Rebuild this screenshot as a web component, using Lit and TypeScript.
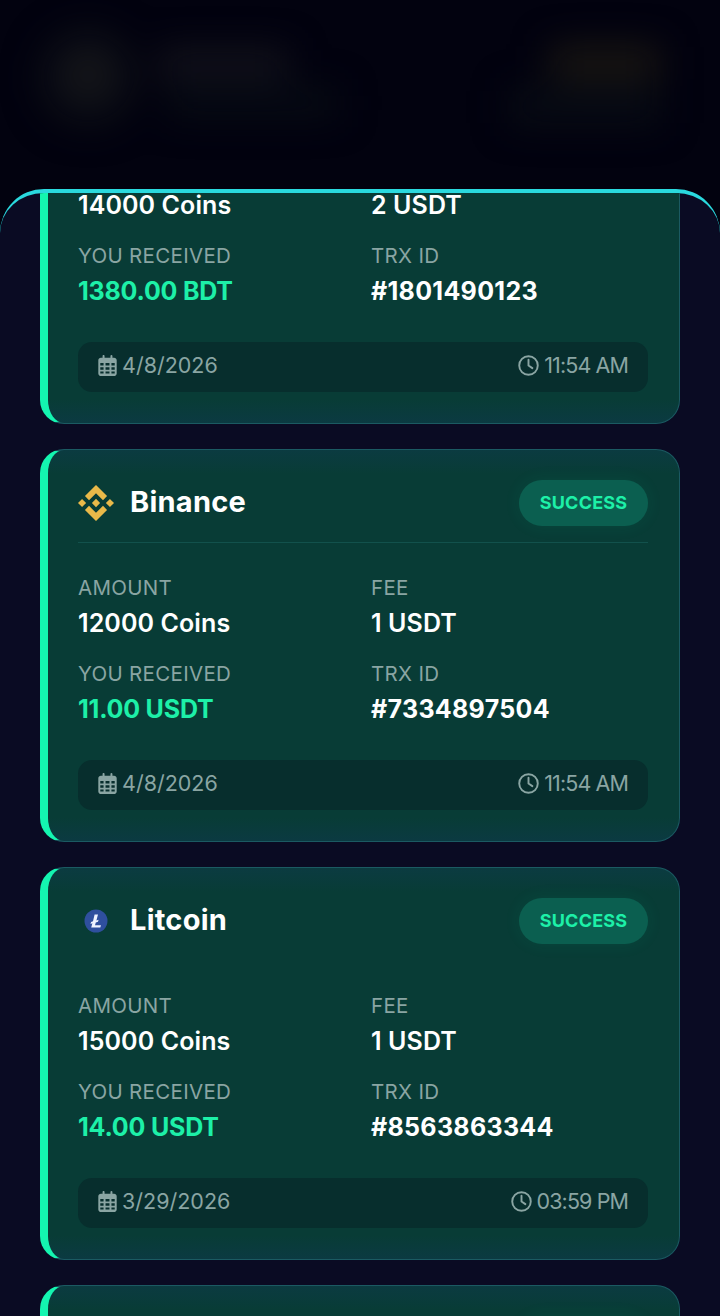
import { LitElement, html, css, svg } from "lit";
import { customElement } from "lit/decorators.js";

interface Tx {
  method: "binance" | "litecoin" | "none";
  name: string;
  amount: string;
  fee: string;
  received: string;
  trx: string;
  date: string;
  time: string;
  divider: boolean;
}

const TXS: Tx[] = [
  { method: "none", name: "", amount: "14000 Coins", fee: "2 USDT", received: "1380.00 BDT", trx: "#1801490123", date: "4/8/2026", time: "11:54 AM", divider: true },
  { method: "binance", name: "Binance", amount: "12000 Coins", fee: "1 USDT", received: "11.00 USDT", trx: "#7334897504", date: "4/8/2026", time: "11:54 AM", divider: true },
  { method: "litecoin", name: "Litcoin", amount: "15000 Coins", fee: "1 USDT", received: "14.00 USDT", trx: "#8563863344", date: "3/29/2026", time: "03:59 PM", divider: false },
  { method: "none", name: "", amount: "", fee: "", received: "", trx: "", date: "", time: "", divider: false },
];

const binance = svg`<svg class="logo" viewBox="0 0 126.61 126.61" width="36" height="36"><g fill="#e9b949"><path d="M38.73 53.2 63.31 28.62 87.91 53.22 102.21 38.91 63.31 0 24.42 38.9z"/><path d="M0 63.31 14.3 49.01 28.6 63.31 14.3 77.61z"/><path d="M38.73 73.41 63.31 97.99 87.91 73.39 102.22 87.69 63.31 126.61 24.41 87.71z"/><path d="M98.01 63.31 112.31 49.01 126.61 63.31 112.31 77.61z"/><path d="M77.83 63.3 63.31 48.78 48.81 63.28 63.31 77.83z"/></g></svg>`;
const litecoin = svg`<svg class="logo" viewBox="0 0 36 36" width="36" height="36"><circle cx="18" cy="18" r="11.5" fill="#2f4f9e"/><path d="M16.6 11.5h3.4l-1.6 6 2.2-.8-.6 2-2.2.8-.8 2.7h6l-.7 2.3H13.2l1.2-4.2-1.9.7.6-2 1.9-.7Z" fill="#eef2ff"/></svg>`;
const calendar = svg`<svg class="ic" viewBox="0 0 448 512" width="19" height="21"><path fill="currentColor" d="M128 0c13 0 24 11 24 24v40h144V24a24 24 0 0 1 48 0v40h40c35 0 64 29 64 64v320c0 35-29 64-64 64H64c-35 0-64-29-64-64V128c0-35 29-64 64-64h40V24c0-13 11-24 24-24ZM48 192v64h80v-64H48Zm128 0v64h96v-64h-96Zm144 0v64h80v-64h-80ZM48 296v64h80v-64H48Zm128 0v64h96v-64h-96Zm144 0v64h80v-64h-80ZM48 400v48h80v-48H48Zm128 0v48h96v-48h-96Zm144 0v48h80v-48h-80Z"/></svg>`;
const clock = svg`<svg class="ic" viewBox="0 0 24 24" width="21" height="21"><circle cx="12" cy="12" r="10.6" fill="none" stroke="currentColor" stroke-width="2.2"/><path d="M12 5.5V12l4.4 3" fill="none" stroke="currentColor" stroke-width="2.2" stroke-linecap="round" stroke-linejoin="round"/></svg>`;

@customElement("app-root")
export class AppRoot extends LitElement {
  static styles = css`
    :host {
      display: block;
      width: 720px;
      height: 1316px;
      overflow: hidden;
      background: #02020f;
      font-family: "Inter", "Open Sans", sans-serif;
    }
    .header {
      height: 189px;
      box-sizing: border-box;
      padding: 30px 60px 0 40px;
      display: flex;
      justify-content: space-between;
      filter: blur(18px);
      overflow: hidden;
    }
    .hleft { display: flex; gap: 22px; }
    .avatar { width: 96px; height: 96px; border-radius: 50%; background: radial-gradient(circle at 50% 45%, #1b1a1c 0, #0c0e16 45%, #06080f 100%); }
    .lines { display: flex; flex-direction: column; gap: 12px; padding-top: 20px; }
    .l1 { width: 130px; height: 28px; background: #14141c; }
    .l2 { width: 170px; height: 26px; background: #070c14; margin-left: 10px; }
    .hright { display: flex; flex-direction: column; gap: 10px; padding-top: 16px; align-items: flex-end; }
    .r1 { width: 110px; height: 34px; background: #1a1712; }
    .r2 { width: 150px; height: 34px; background: #080c14; }
    .sheet {
      height: 1127px;
      box-sizing: border-box;
      background: #0a0b23;
      border-top: 4px solid #2ad9de;
      border-radius: 44px 44px 0 0;
      overflow: hidden;
    }
    .list {
      margin-top: -162px;
      padding: 0 40px;
      display: flex;
      flex-direction: column;
      gap: 25px;
    }
    .card {
      flex: none;
      height: 393px;
      box-sizing: border-box;
      padding: 30px 31px 31px 30px;
      background: linear-gradient(180deg, #0b3b41 0, #083c36 24px, #083c36 calc(100% - 24px), #0b3a42 100%);
      border: 1px solid #1b5a62;
      border-left: 8px solid #14f5b0;
      border-radius: 24px;
      display: flex;
      flex-direction: column;
    }
    .head {
      height: 46px;
      padding-bottom: 16px;
      flex: none;
      display: flex;
      align-items: center;
      justify-content: space-between;
      border-bottom: 1px solid transparent;
    }
    .head.rule { border-bottom-color: #12514c; }
    .method { display: flex; align-items: center; gap: 16px; margin-top: -1px; }
    .logo { display: block; }
    .name { font-size: 29px; line-height: 36px; padding-bottom: 2px; font-weight: 700; color: #fff; letter-spacing: 0.25px; }
    .badge {
      width: 129px;
      height: 46px;
      box-sizing: border-box;
      padding-bottom: 2px;
      border-radius: 23px;
      background: #0b5f50;
      box-shadow: 0 0 18px rgba(29, 240, 168, 0.07);
      color: #1df0a8;
      font-size: 18px;
      font-weight: 700;
      display: flex;
      align-items: center;
      justify-content: center;
      letter-spacing: 0.2px;
    }
    .grid {
      margin-top: 29px;
      display: grid;
      grid-template-columns: 277px 277px;
      column-gap: 16px;
      row-gap: 20px;
    }
    .cell { display: flex; flex-direction: column; gap: 8px; }
    .label { font-size: 20.5px; line-height: 32px; height: 28px; color: #8aa5a3; letter-spacing: 0.3px; }
    .value { font-size: 25px; line-height: 30px; font-weight: 600; color: #fff; letter-spacing: 0.1px; }
    .green { color: #1df0a8; font-weight: 700; letter-spacing: -0.2px; }
    .mono { font-weight: 700; letter-spacing: 0.3px; }
    .foot {
      margin-top: auto;
      height: 50px;
      flex: none;
      box-sizing: border-box;
      padding: 0 20px 4px;
      background: #072e2d;
      border-radius: 14px;
      display: flex;
      align-items: center;
      justify-content: space-between;
      color: #8aa5a3;
      font-size: 21.5px;
    }
    .stamp { display: flex; align-items: center; gap: 5px; }
    .time { letter-spacing: -0.9px; }
    .ic { display: block; }
    .skeleton { height: 393px; }
  `;

  private logo(t: Tx) {
    if (t.method === "binance") return binance;
    if (t.method === "litecoin") return litecoin;
    return html`<span class="logo"></span>`;
  }

  render() {
    return html`
      <div class="header">
        <div class="hleft">
          <div class="avatar"></div>
          <div class="lines"><div class="l1"></div><div class="l2"></div></div>
        </div>
        <div class="hright"><div class="r1"></div><div class="r2"></div></div>
      </div>
      <div class="sheet">
        <div class="list">
          ${TXS.map((t) => t.amount === "" ? html`<div class="card skeleton"><div class="head"><span></span><span class="badge"></span></div></div>` : html`
            <article class="card">
              <div class="head ${t.divider && t.method !== "none" ? "rule" : ""}">
                <div class="method">${this.logo(t)}<span class="name">${t.name}</span></div>
                <span class="badge">SUCCESS</span>
              </div>
              <div class="grid">
                <div class="cell"><span class="label">AMOUNT</span><span class="value">${t.amount}</span></div>
                <div class="cell"><span class="label">FEE</span><span class="value">${t.fee}</span></div>
                <div class="cell"><span class="label">YOU RECEIVED</span><span class="value green">${t.received}</span></div>
                <div class="cell"><span class="label">TRX ID</span><span class="value mono">${t.trx}</span></div>
              </div>
              <div class="foot">
                <span class="stamp">${calendar}<span>${t.date}</span></span>
                <span class="stamp">${clock}<span class="time">${t.time}</span></span>
              </div>
            </article>`)}
        </div>
      </div>
    `;
  }
}
